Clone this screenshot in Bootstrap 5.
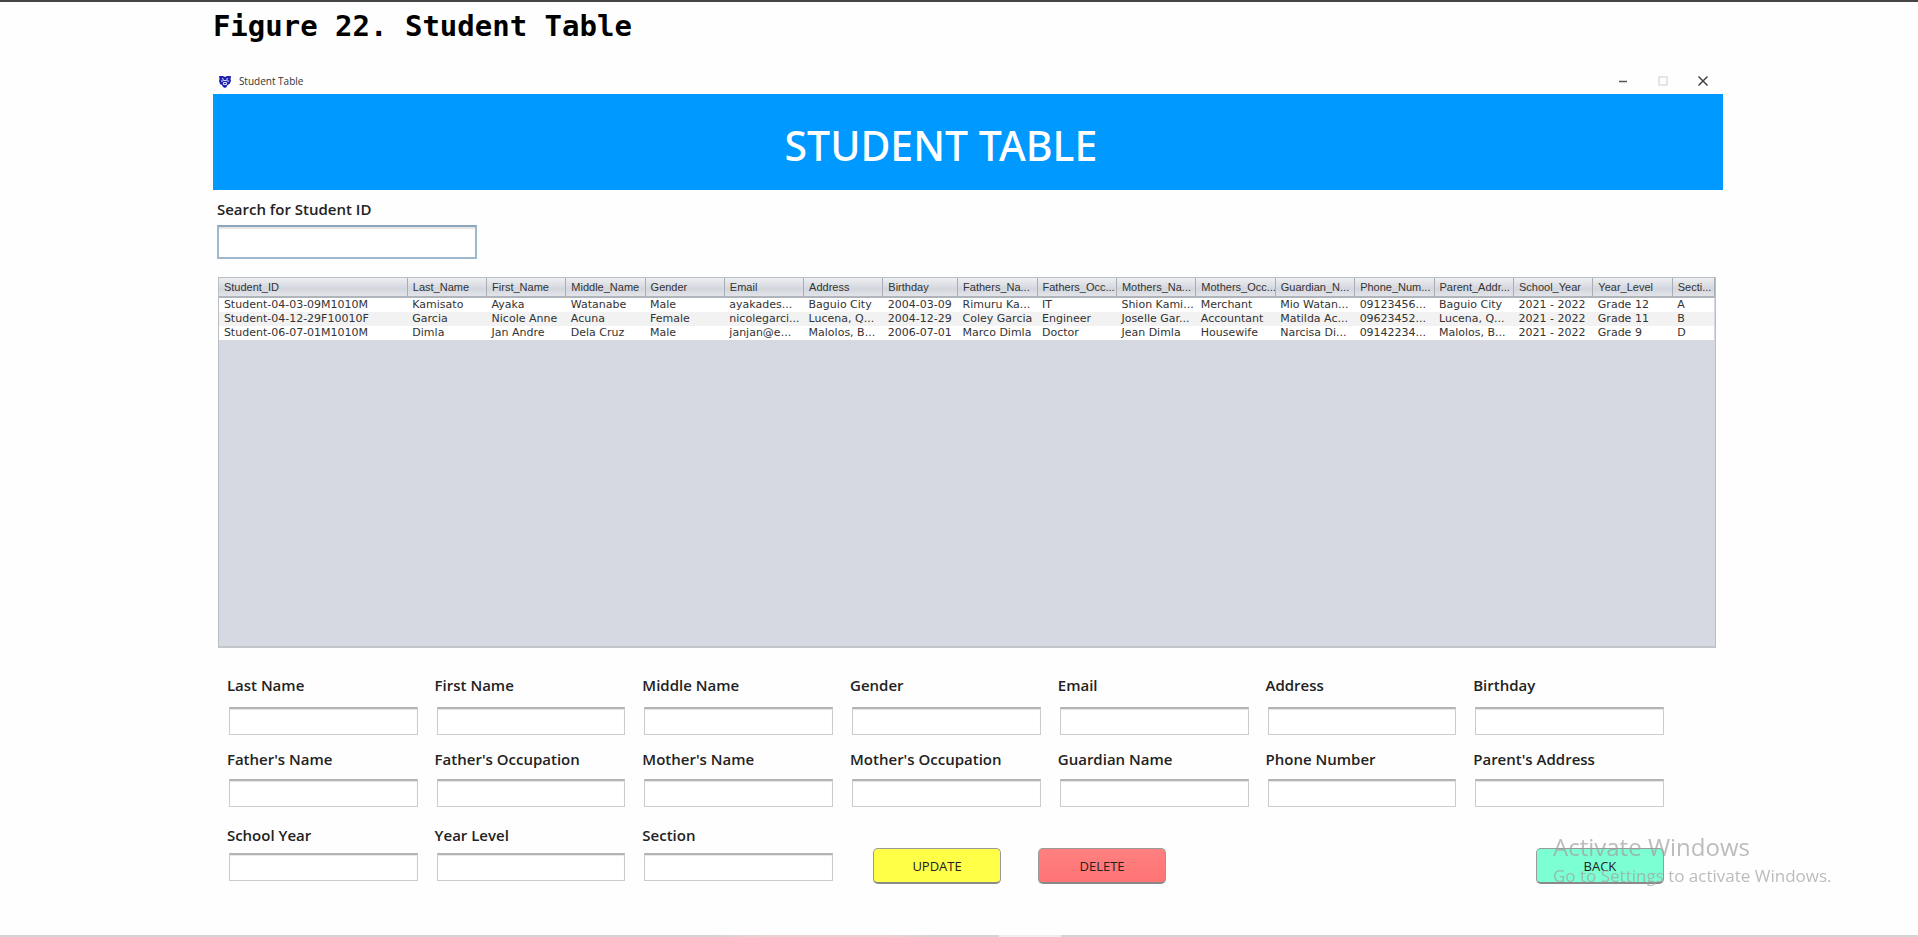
<!DOCTYPE html>
<html lang="en">
<head>
<meta charset="utf-8">
<meta name="viewport" content="width=device-width, initial-scale=1">
<title>Student Table</title>
<link href="https://cdn.jsdelivr.net/npm/bootstrap@5.3.0/dist/css/bootstrap.min.css" rel="stylesheet">
<style>
  body { font-family: "Open Sans", "Noto Sans", sans-serif; background: #fefefe; color: #222; }
  .page-sheet { border-top: 2px solid #444; padding-left: 11.1vw; padding-right: 10.17vw; }
  .figure-title { font: bold 29px/48px "DejaVu Sans Mono", monospace; color: #000; }
  .title-bar { height: 28px; margin-top: 16px; padding: 2px 0 0 6px; font-size: 10px; color: #333; }
  .win-btn { width: 40px; height: 24px; padding: 0; border: 0; background: none; line-height: 0; }
  .banner { background: #0099ff; height: 96px; padding: 6px 54px 0 0; color: #fff; }
  .banner h1 { font-family: "Noto Sans", "Open Sans", sans-serif; font-size: 41px; line-height: 60px; font-weight: 500; }
  .field-label { display: block; font-size: 15px; line-height: 20px; font-weight: 600; color: #222; white-space: nowrap; }
  .search-block { padding: 9px 4px 18px; }
  .search-box { width: 260px; height: 34px; margin-top: 6px; border: 2px solid #9fb8d0; border-top-color: #8ea6bd; border-radius: 0; background: #fff; box-shadow: inset 0 2px 1px #e4e4e4; }
  .grid-panel { min-height: 371px; margin: 0 7px 0 5px; background: #d6d9e1; border: 1px solid #b9bdc4; border-bottom: 2px solid #c2c6cb; }
  .student-grid { width: 100%; table-layout: fixed; font: 11px/14px "DejaVu Sans", sans-serif; color: #333; white-space: nowrap; }
  .student-grid th { height: 19px; padding: 0 0 0 5px; font: 11px/17px "Liberation Sans", sans-serif; overflow: hidden; background: linear-gradient(#eeeff2, #d9dce2 45%, #d3d6dd 60%, #e2e4e9); border-right: 1px solid #a9adb5; border-bottom: 2px solid #b0b4bb; }
  .student-grid td { height: 14px; padding: 0 0 0 5px; overflow: hidden; background: #fff; }
  .student-grid tbody tr:nth-child(even) td { background: #f2f2f2; }
  .form-block { padding: 27px 59px 0 16px; }
  .field-row { display: grid; grid-template-columns: repeat(7, minmax(0, 1fr)); column-gap: 19px; }
  .field-row .field-label { margin-left: -2px; }
  .text-field { width: 100%; height: 28px; border: 1px solid #ccc; border-top: 2px solid #b4b4b4; border-radius: 0; background: #fff; box-shadow: inset 0 1px 1px #e6e6e6; }
  .row-a .text-field { margin-top: 12px; }
  .row-b { margin-top: 14px; }
  .row-b .text-field { margin-top: 10px; }
  .row-c { margin-top: 18px; }
  .row-c .text-field { margin-top: 8px; }
  .actions { grid-column: 4 / -1; gap: 37px; padding: 23px 0 0 21px; }
  .act { width: 128px; height: 36px; padding: 0; border: 1px solid #9a9a9a; border-bottom: 2px solid #8a8a8a; border-radius: 5px; font-size: 13px; line-height: 20px; color: #222; }
  .act-update { background: #ffff48; }
  .act-delete { background: linear-gradient(#ff8080, #ff7474); }
  .act-back { background: #7dffd4; }
  .watermark { position: fixed; right: 80px; bottom: 48px; width: 285px; color: rgba(160,160,160,.7); pointer-events: none; white-space: nowrap; }
  .watermark .wm-head { font-size: 24px; line-height: 32px; }
  .watermark .wm-text { font-size: 17px; line-height: 26px; }
  .sheet-edge { height: 2px; background: linear-gradient(90deg, #d4d4d4 0 37%, #ebd2d2 40% 46%, #d4d4d4 49% 52.1%, #eee 52.1% 55.3%, #d4d4d4 55.3%); }
</style>
</head>
<body class="d-flex flex-column min-vh-100">
<main class="page-sheet flex-grow-1">
  <h2 class="figure-title mb-0">Figure 22. Student Table</h2>
  <header class="title-bar d-flex align-items-center">
    <svg width="12" height="13" viewBox="0 0 12 13" class="me-1" aria-hidden="true"><path d="M0 1l4 0 2 1 2-1 4 0-.5 3 .5 2-1.500 3-2 1-1 2-1.500 1L4 12l-1-2-2-1L0 6l.5-2z" fill="#2020b0"/><path d="M3.500 3l1 2.500h3L8.500 3M2 6h2M8 6h2M4.500 7.500h3v2h-3z" stroke="#dfe2ff" fill="none"/></svg>
    <span class="ms-1">Student Table</span>
    <div class="ms-auto d-flex">
      <button class="win-btn" type="button" aria-label="Minimize"><svg width="10" height="10"><path d="M1 5.500h8" stroke="#555" stroke-width="1.500"/></svg></button>
      <button class="win-btn" type="button" aria-label="Maximize"><svg width="10" height="10"><path d="M1 1h8v8H1z" stroke="#ddd" stroke-width="1.500" fill="none"/></svg></button>
      <button class="win-btn" type="button" aria-label="Close"><svg width="10" height="10"><path d="M.5.5l9 9M9.500.5l-9 9" stroke="#444" stroke-width="1.500"/></svg></button>
    </div>
  </header>
  <div class="banner d-flex align-items-center justify-content-center"><h1 class="mb-0">STUDENT TABLE</h1></div>
  <div class="search-block">
    <label class="field-label" for="search">Search for Student ID</label>
    <input class="search-box d-block" id="search" type="text">
  </div>
  <div class="grid-panel">
    <table class="student-grid">
      <colgroup><col style="width:12.6%"><col span="6" style="width:5.3%"><col style="width:5%"><col span="9" style="width:5.31%"><col></colgroup>
      <thead><tr><th>Student_ID</th><th>Last_Name</th><th>First_Name</th><th>Middle_Name</th><th>Gender</th><th>Email</th><th>Address</th><th>Birthday</th><th>Fathers_Na...</th><th>Fathers_Occ...</th><th>Mothers_Na...</th><th>Mothers_Occ...</th><th>Guardian_N...</th><th>Phone_Num...</th><th>Parent_Addr...</th><th>School_Year</th><th>Year_Level</th><th>Secti...</th></tr></thead>
      <tbody>
        <tr><td>Student-04-03-09M1010M</td><td>Kamisato</td><td>Ayaka</td><td>Watanabe</td><td>Male</td><td>ayakades...</td><td>Baguio City</td><td>2004-03-09</td><td>Rimuru Ka...</td><td>IT</td><td>Shion Kami...</td><td>Merchant</td><td>Mio Watan...</td><td>09123456...</td><td>Baguio City</td><td>2021 - 2022</td><td>Grade 12</td><td>A</td></tr>
        <tr><td>Student-04-12-29F10010F</td><td>Garcia</td><td>Nicole Anne</td><td>Acuna</td><td>Female</td><td>nicolegarci...</td><td>Lucena, Q...</td><td>2004-12-29</td><td>Coley Garcia</td><td>Engineer</td><td>Joselle Gar...</td><td>Accountant</td><td>Matilda Ac...</td><td>09623452...</td><td>Lucena, Q...</td><td>2021 - 2022</td><td>Grade 11</td><td>B</td></tr>
        <tr><td>Student-06-07-01M1010M</td><td>Dimla</td><td>Jan Andre</td><td>Dela Cruz</td><td>Male</td><td>janjan@e...</td><td>Malolos, B...</td><td>2006-07-01</td><td>Marco Dimla</td><td>Doctor</td><td>Jean Dimla</td><td>Housewife</td><td>Narcisa Di...</td><td>09142234...</td><td>Malolos, B...</td><td>2021 - 2022</td><td>Grade 9</td><td>D</td></tr>
      </tbody>
    </table>
  </div>
  <form class="form-block">
    <div class="field-row row-a">
      <div><label class="field-label" for="f1">Last Name</label><input class="text-field d-block" id="f1" type="text"></div>
      <div><label class="field-label" for="f2">First Name</label><input class="text-field d-block" id="f2" type="text"></div>
      <div><label class="field-label" for="f3">Middle Name</label><input class="text-field d-block" id="f3" type="text"></div>
      <div><label class="field-label" for="f4">Gender</label><input class="text-field d-block" id="f4" type="text"></div>
      <div><label class="field-label" for="f5">Email</label><input class="text-field d-block" id="f5" type="text"></div>
      <div><label class="field-label" for="f6">Address</label><input class="text-field d-block" id="f6" type="text"></div>
      <div><label class="field-label" for="f7">Birthday</label><input class="text-field d-block" id="f7" type="text"></div>
    </div>
    <div class="field-row row-b">
      <div><label class="field-label" for="g1">Father's Name</label><input class="text-field d-block" id="g1" type="text"></div>
      <div><label class="field-label" for="g2">Father's Occupation</label><input class="text-field d-block" id="g2" type="text"></div>
      <div><label class="field-label" for="g3">Mother's Name</label><input class="text-field d-block" id="g3" type="text"></div>
      <div><label class="field-label" for="g4">Mother's Occupation</label><input class="text-field d-block" id="g4" type="text"></div>
      <div><label class="field-label" for="g5">Guardian Name</label><input class="text-field d-block" id="g5" type="text"></div>
      <div><label class="field-label" for="g6">Phone Number</label><input class="text-field d-block" id="g6" type="text"></div>
      <div><label class="field-label" for="g7">Parent's Address</label><input class="text-field d-block" id="g7" type="text"></div>
    </div>
    <div class="field-row row-c">
      <div><label class="field-label" for="h1">School Year</label><input class="text-field d-block" id="h1" type="text"></div>
      <div><label class="field-label" for="h2">Year Level</label><input class="text-field d-block" id="h2" type="text"></div>
      <div><label class="field-label" for="h3">Section</label><input class="text-field d-block" id="h3" type="text"></div>
      <div class="actions d-flex">
        <button class="btn act act-update" type="button">UPDATE</button>
        <button class="btn act act-delete" type="button">DELETE</button>
        <button class="btn act act-back ms-auto" type="button">BACK</button>
      </div>
    </div>
  </form>
</main>
<aside class="watermark"><div class="wm-head">Activate Windows</div><div class="wm-text">Go to Settings to activate Windows.</div></aside>
<div class="sheet-edge"></div>
<script src="https://cdn.jsdelivr.net/npm/bootstrap@5.3.0/dist/js/bootstrap.bundle.min.js"></script>
</body>
</html>
